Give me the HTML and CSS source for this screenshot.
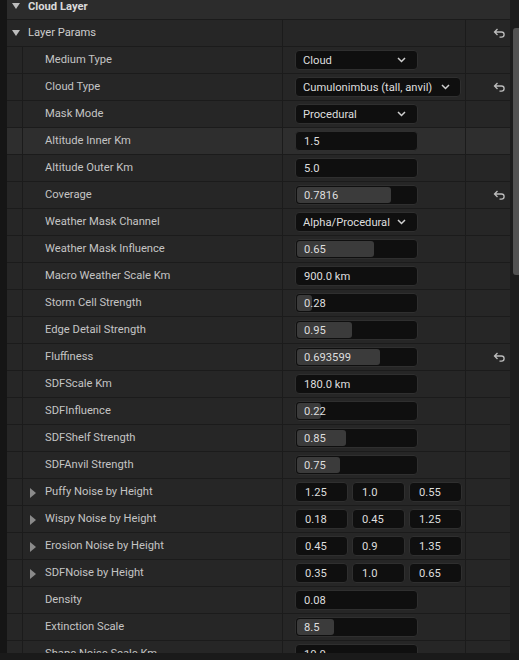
FILE: index.html
```html
<html>
    <head>
        <title>Details - Cloud Layer</title>
        <meta name="viewport" content="width=device-width, initial-scale=1.0">
        <link rel="stylesheet" href="styles.css">
    </head>
    <body>
    <div class="window">
        <div class="panel">
            <div class="list">
                <!-- category header -->
                <div class="row head">
                    <span class="caret-down"></span>Cloud Layer
                </div>

                <div class="row cat">
                    <div class="cat-name"><span class="caret-down"></span>Layer Params</div>
                    <div class="value"></div>
                    <div class="reset"><svg class="undo" viewBox="0 0 13 10"><path d="M4.5 1 L1.5 4 L4.5 7 M1.5 4 H8.5 A2.6 2.6 0 0 1 8.5 9.2 H6.5"/></svg></div>
                </div>

                <div class="row">
                    <div class="gutter"></div>
                    <div class="name">Medium Type</div>
                    <div class="value"><div class="combo">Cloud<svg class="chev" viewBox="0 0 9 6"><path d="M1 1 L4.5 4.5 L8 1"/></svg></div></div>
                    <div class="reset"></div>
                </div>
                <div class="row">
                    <div class="gutter"></div>
                    <div class="name">Cloud Type</div>
                    <div class="value"><div class="combo wide">Cumulonimbus (tall, anvil)<svg class="chev" viewBox="0 0 9 6"><path d="M1 1 L4.5 4.5 L8 1"/></svg></div></div>
                    <div class="reset"><svg class="undo" viewBox="0 0 13 10"><path d="M4.5 1 L1.5 4 L4.5 7 M1.5 4 H8.5 A2.6 2.6 0 0 1 8.5 9.2 H6.5"/></svg></div>
                </div>
                <div class="row">
                    <div class="gutter"></div>
                    <div class="name">Mask Mode</div>
                    <div class="value"><div class="combo">Procedural<svg class="chev" viewBox="0 0 9 6"><path d="M1 1 L4.5 4.5 L8 1"/></svg></div></div>
                    <div class="reset"></div>
                </div>
                <div class="row hover">
                    <div class="gutter"></div>
                    <div class="name">Altitude Inner Km</div>
                    <div class="value"><div class="field">1.5</div></div>
                    <div class="reset"></div>
                </div>
                <div class="row">
                    <div class="gutter"></div>
                    <div class="name">Altitude Outer Km</div>
                    <div class="value"><div class="field">5.0</div></div>
                    <div class="reset"></div>
                </div>
                <div class="row">
                    <div class="gutter"></div>
                    <div class="name">Coverage</div>
                    <div class="value"><div class="field slider"><div class="fill" style="width:77.5%"></div><span>0.7816</span></div></div>
                    <div class="reset"><svg class="undo" viewBox="0 0 13 10"><path d="M4.5 1 L1.5 4 L4.5 7 M1.5 4 H8.5 A2.6 2.6 0 0 1 8.5 9.2 H6.5"/></svg></div>
                </div>
                <div class="row">
                    <div class="gutter"></div>
                    <div class="name">Weather Mask Channel</div>
                    <div class="value"><div class="combo">Alpha/Procedural<svg class="chev" viewBox="0 0 9 6"><path d="M1 1 L4.5 4.5 L8 1"/></svg></div></div>
                    <div class="reset"></div>
                </div>
                <div class="row">
                    <div class="gutter"></div>
                    <div class="name">Weather Mask Influence</div>
                    <div class="value"><div class="field slider"><div class="fill" style="width:63.5%"></div><span>0.65</span></div></div>
                    <div class="reset"></div>
                </div>
                <div class="row">
                    <div class="gutter"></div>
                    <div class="name">Macro Weather Scale Km</div>
                    <div class="value"><div class="field">900.0 km</div></div>
                    <div class="reset"></div>
                </div>
                <div class="row">
                    <div class="gutter"></div>
                    <div class="name">Storm Cell Strength</div>
                    <div class="value"><div class="field slider"><div class="fill" style="width:12%"></div><span>0.28</span></div></div>
                    <div class="reset"></div>
                </div>
                <div class="row">
                    <div class="gutter"></div>
                    <div class="name">Edge Detail Strength</div>
                    <div class="value"><div class="field slider"><div class="fill" style="width:45.5%"></div><span>0.95</span></div></div>
                    <div class="reset"></div>
                </div>
                <div class="row">
                    <div class="gutter"></div>
                    <div class="name">Fluffiness</div>
                    <div class="value"><div class="field slider"><div class="fill" style="width:68.5%"></div><span>0.693599</span></div></div>
                    <div class="reset"><svg class="undo" viewBox="0 0 13 10"><path d="M4.5 1 L1.5 4 L4.5 7 M1.5 4 H8.5 A2.6 2.6 0 0 1 8.5 9.2 H6.5"/></svg></div>
                </div>
                <div class="row">
                    <div class="gutter"></div>
                    <div class="name">SDFScale Km</div>
                    <div class="value"><div class="field">180.0 km</div></div>
                    <div class="reset"></div>
                </div>
                <div class="row">
                    <div class="gutter"></div>
                    <div class="name">SDFInfluence</div>
                    <div class="value"><div class="field slider"><div class="fill" style="width:20%"></div><span>0.22</span></div></div>
                    <div class="reset"></div>
                </div>
                <div class="row">
                    <div class="gutter"></div>
                    <div class="name">SDFShelf Strength</div>
                    <div class="value"><div class="field slider"><div class="fill" style="width:40.5%"></div><span>0.85</span></div></div>
                    <div class="reset"></div>
                </div>
                <div class="row">
                    <div class="gutter"></div>
                    <div class="name">SDFAnvil Strength</div>
                    <div class="value"><div class="field slider"><div class="fill" style="width:35.5%"></div><span>0.75</span></div></div>
                    <div class="reset"></div>
                </div>
                <div class="row">
                    <div class="gutter"></div>
                    <div class="name"><span class="caret-right"></span>Puffy Noise by Height</div>
                    <div class="value vec"><div class="field">1.25</div><div class="field">1.0</div><div class="field">0.55</div></div>
                    <div class="reset"></div>
                </div>
                <div class="row">
                    <div class="gutter"></div>
                    <div class="name"><span class="caret-right"></span>Wispy Noise by Height</div>
                    <div class="value vec"><div class="field">0.18</div><div class="field">0.45</div><div class="field">1.25</div></div>
                    <div class="reset"></div>
                </div>
                <div class="row">
                    <div class="gutter"></div>
                    <div class="name"><span class="caret-right"></span>Erosion Noise by Height</div>
                    <div class="value vec"><div class="field">0.45</div><div class="field">0.9</div><div class="field">1.35</div></div>
                    <div class="reset"></div>
                </div>
                <div class="row">
                    <div class="gutter"></div>
                    <div class="name"><span class="caret-right"></span>SDFNoise by Height</div>
                    <div class="value vec"><div class="field">0.35</div><div class="field">1.0</div><div class="field">0.65</div></div>
                    <div class="reset"></div>
                </div>
                <div class="row">
                    <div class="gutter"></div>
                    <div class="name">Density</div>
                    <div class="value"><div class="field">0.08</div></div>
                    <div class="reset"></div>
                </div>
                <div class="row">
                    <div class="gutter"></div>
                    <div class="name">Extinction Scale</div>
                    <div class="value"><div class="field slider"><div class="fill" style="width:30.5%"></div><span>8.5</span></div></div>
                    <div class="reset"></div>
                </div>
                <div class="row">
                    <div class="gutter"></div>
                    <div class="name">Shape Noise Scale Km</div>
                    <div class="value"><div class="field">10.0</div></div>
                    <div class="reset"></div>
                </div>
            </div>
        </div>
        <div class="scrollbar"><div class="thumb"></div></div>
    </div>
    <div class="footer"></div>
    </body>
</html>
```

FILE: styles.css
```css
body{
    margin: 0;
    background-color: #151515;
    font-family: Roboto, 'Noto Sans', sans-serif;
    font-size: 11.2px;
    color: #c4c4c4;
    width: 519px;
    height: 660px;
    overflow: hidden;
}

.window{
    display: flex;
    height: 653px;
    padding-left: 7px;
}

.panel{
    width: 503px;
    overflow: hidden;
    background-color: #1b1b1b;
}

.list{
    margin-top: -7px;
}

.row{
    display: flex;
    height: 26px;
    border-bottom: 1px solid #1b1b1b;
    background-color: #262626;
}

.row.hover{
    background-color: #2e2e2e;
}

.head{
    align-items: center;
    background-color: #2c2c2c;
    font-weight: bold;
    color: #dadada;
}

.caret-down{
    display: inline-block;
    width: 0;
    height: 0;
    border-left: 4.5px solid transparent;
    border-right: 4.5px solid transparent;
    border-top: 6px solid #bdbdbd;
    margin-left: 5px;
    margin-right: 8px;
}

.caret-right{
    display: inline-block;
    width: 0;
    height: 0;
    border-top: 5px solid transparent;
    border-bottom: 5px solid transparent;
    border-left: 6px solid #8a8a8a;
    position: relative;
    left: -15px;
    top: 1px;
    margin-right: -6px;
}

.cat-name{
    width: 275px;
    border-right: 1px solid #1b1b1b;
    display: flex;
    align-items: center;
    padding-bottom: 1px;
    color: #cdcdcd;
}

.gutter{
    width: 15px;
    border-right: 1px solid #1b1b1b;
}

.name{
    width: 237px;
    padding-left: 22px;
    padding-bottom: 1px;
    border-right: 1px solid #1b1b1b;
    display: flex;
    align-items: center;
}

.value{
    width: 170px;
    padding-left: 12px;
    border-right: 1px solid #1b1b1b;
    display: flex;
    align-items: center;
}

.vec{
    gap: 4px;
}

.reset{
    width: 44px;
    display: flex;
    align-items: center;
    justify-content: flex-end;
    padding-right: 4px;
    box-sizing: border-box;
}

.undo{
    width: 13px;
    height: 10px;
    fill: none;
    stroke: #bdbdbd;
    stroke-width: 1.3;
}

.combo, .field{
    box-sizing: border-box;
    height: 20px;
    width: 123px;
    background-color: #0f0f0f;
    border: 1px solid #2f2f2f;
    border-radius: 4px;
    display: flex;
    align-items: center;
    color: #dedede;
}

.combo{
    padding-left: 7px;
    padding-right: 11px;
    justify-content: space-between;
}

.combo.wide{
    width: 166px;
    padding-right: 10px;
}

.chev{
    width: 9px;
    height: 6px;
    fill: none;
    stroke: #d0d0d0;
    stroke-width: 1.5;
}

.field{
    padding-left: 8px;
}

.vec .field{
    width: 53px;
    padding-left: 9px;
}

.slider{
    position: relative;
    padding: 0;
}

.slider .fill{
    height: 16px;
    margin-left: 1px;
    border-radius: 3px;
    background-color: #3b3b3b;
}

.slider span{
    position: absolute;
    left: 8px;
    top: 3px;
}

.scrollbar{
    width: 9px;
    background-color: #1c1c1c;
    display: flex;
    justify-content: flex-end;
}

.thumb{
    width: 6px;
    height: 247px;
    margin-top: 28px;
    background-color: #525252;
    border-radius: 3px 0 0 3px;
}

.footer{
    height: 7px;
    background-color: #1a1a1a;
}
```
